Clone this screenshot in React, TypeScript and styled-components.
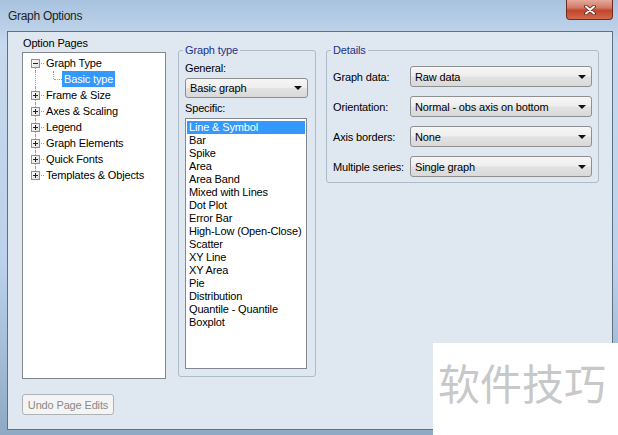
import React from "react";
import styled, { createGlobalStyle } from "styled-components";

const GlobalStyle = createGlobalStyle`
  html, body {
    margin: 0;
    padding: 0;
  }
  body {
    width: 618px;
    height: 435px;
    overflow: hidden;
    font-family: "Liberation Sans", Arial, sans-serif;
    font-size: 11px;
    color: #000;
  }
`;

const Frame = styled.div`
  position: relative;
  width: 618px;
  height: 435px;
  box-sizing: border-box;
  padding: 0 5px 5px 7px;
  display: flex;
  flex-direction: column;
  background: linear-gradient(180deg, #a8c2de 0%, #c6d9ee 10%, #bcd2ea 60%, #8fa9c4 100%);
  overflow: hidden;
`;

const TitleBar = styled.div`
  height: 31px;
  display: flex;
  justify-content: space-between;
  align-items: flex-start;
`;

const Title = styled.div`
  margin-top: 9px;
  padding-left: 1px;
  font-size: 12px;
  letter-spacing: -0.3px;
  color: #1e1e1e;
`;

const CloseButton = styled.div`
  width: 47px;
  height: 20px;
  box-sizing: border-box;
  display: flex;
  align-items: center;
  justify-content: center;
  border: 1px solid #6e2b20;
  border-top: none;
  border-radius: 0 0 4px 4px;
  background: linear-gradient(180deg, #e5a99b 0%, #d47a66 40%, #c2462c 55%, #cf6a4f 100%);
`;

const Client = styled.div`
  flex: 1;
  border: 1px solid #5d7186;
  background: #dfe7f1;
  display: flex;
  flex-direction: column;
  padding: 4px 0 0 14px;
`;

const TopRow = styled.div`
  display: flex;
  align-items: flex-start;
`;

const PagesColumn = styled.div`
  width: 144px;
  display: flex;
  flex-direction: column;
`;

const PagesLabel = styled.div`
  line-height: 14px;
  padding-left: 1px;
  margin-bottom: 2px;
  letter-spacing: -0.15px;
`;

const Tree = styled.div`
  height: 327px;
  box-sizing: border-box;
  border: 1px solid #828790;
  background: #fff;
  padding: 2px 0 0 4px;
`;

const TreeRow = styled.div`
  display: flex;
  height: 16px;
  align-items: center;
`;

type LinePart = "first" | "mid" | "last";

const Gutter = styled.div<{ $line: LinePart; $branch: boolean }>`
  position: relative;
  width: 17px;
  height: 16px;
  flex: none;

  &::before {
    content: "";
    position: absolute;
    left: 8px;
    top: ${(p) => (p.$line === "first" ? "8px" : "0")};
    bottom: ${(p) => (p.$line === "last" ? "8px" : "0")};
    border-left: 1px dotted #9a9a9a;
  }

  &::after {
    content: "";
    display: ${(p) => (p.$branch ? "block" : "none")};
    position: absolute;
    left: 9px;
    right: 0;
    top: 8px;
    border-top: 1px dotted #9a9a9a;
  }
`;

const SubGutter = styled.div`
  position: relative;
  width: 18px;
  height: 16px;
  flex: none;

  &::before {
    content: "";
    position: absolute;
    left: 9px;
    top: 0;
    height: 8px;
    border-left: 1px dotted #9a9a9a;
  }

  &::after {
    content: "";
    position: absolute;
    left: 10px;
    right: 0;
    top: 8px;
    border-top: 1px dotted #9a9a9a;
  }
`;

const ExpanderBox = styled.svg`
  position: absolute;
  left: 4px;
  top: 4px;
  z-index: 1;
`;

const TreeLabel = styled.span<{ $selected?: boolean }>`
  padding: 0 2px;
  line-height: 16px;
  white-space: nowrap;
  letter-spacing: -0.15px;
  background: ${(p) => (p.$selected ? "#3399ff" : "transparent")};
  color: ${(p) => (p.$selected ? "#fff" : "#000")};
`;

const Group = styled.fieldset<{ $width: number; $gap: number; $height?: number }>`
  width: ${(p) => p.$width}px;
  ${(p) => (p.$height ? `height: ${p.$height}px;` : "")}
  box-sizing: border-box;
  margin: 7px 0 0 ${(p) => p.$gap}px;
  border: 1px solid #aebbc9;
  border-radius: 3px;
  min-width: 0;
`;

const GraphTypeGroup = styled(Group)`
  padding: 4px 7px 7px 6px;
  display: flex;
  flex-direction: column;
`;

const DetailsGroup = styled(Group)`
  padding: 9px 6px 5px 6px;
`;

const Legend = styled.legend`
  padding: 0 2px;
  margin-left: -2px;
  line-height: 14px;
  color: #1e3287;
  letter-spacing: -0.15px;
`;

const FieldLabel = styled.div<{ $top?: number }>`
  line-height: 14px;
  margin-top: ${(p) => p.$top ?? 0}px;
  letter-spacing: -0.15px;
`;

const Combo = styled.div<{ $width: number; $height: number; $top?: number }>`
  width: ${(p) => p.$width}px;
  height: ${(p) => p.$height}px;
  margin-top: ${(p) => p.$top ?? 0}px;
  box-sizing: border-box;
  display: flex;
  align-items: center;
  justify-content: space-between;
  padding: 0 5px 0 4px;
  border: 1px solid #8e8f8f;
  border-radius: 3px;
  background: linear-gradient(180deg, #f6f6f6 0%, #eeeeee 48%, #e2e2e2 52%, #d9d9d9 100%);
  letter-spacing: -0.15px;
  white-space: nowrap;
`;

const Arrow = styled.span`
  width: 0;
  height: 0;
  border-left: 4px solid transparent;
  border-right: 4px solid transparent;
  border-top: 4px solid #111;
`;

const ListBox = styled.div`
  width: 122px;
  height: 251px;
  margin-top: 3px;
  box-sizing: border-box;
  border: 1px solid #828790;
  background: #fff;
  padding: 2px 1px 1px;
`;

const ListItem = styled.div<{ $selected?: boolean }>`
  line-height: 13px;
  padding: 0 2px;
  white-space: nowrap;
  letter-spacing: -0.15px;
  background: ${(p) => (p.$selected ? "#3399ff" : "transparent")};
  color: ${(p) => (p.$selected ? "#fff" : "#000")};
`;

const DetailsGrid = styled.div`
  display: grid;
  grid-template-columns: 77px 182px;
  row-gap: 9px;
  align-items: center;
`;

const UndoButton = styled.button`
  align-self: flex-start;
  margin-top: 15px;
  width: 92px;
  height: 21px;
  padding: 0;
  font-family: inherit;
  font-size: 11px;
  letter-spacing: -0.15px;
  color: #8a8a8a;
  border: 1px solid #adb2b5;
  border-radius: 3px;
  background: #f4f4f4;
`;

const Watermark = styled.div`
  position: absolute;
  right: 0;
  bottom: 0;
  width: 185px;
  height: 92px;
  box-sizing: border-box;
  padding: 18px 0 0 5px;
  background: #fff;
  font-family: "Noto Sans CJK SC", sans-serif;
  font-size: 42px;
  line-height: 1;
  color: #c8c8c8;
  white-space: nowrap;
`;

interface TreeItem {
  label: string;
  line: LinePart;
  child?: boolean;
  expanded?: boolean;
  selected?: boolean;
}

const treeItems: TreeItem[] = [
  { label: "Graph Type", line: "first", expanded: true },
  { label: "Basic type", line: "mid", child: true, selected: true },
  { label: "Frame & Size", line: "mid" },
  { label: "Axes & Scaling", line: "mid" },
  { label: "Legend", line: "mid" },
  { label: "Graph Elements", line: "mid" },
  { label: "Quick Fonts", line: "mid" },
  { label: "Templates & Objects", line: "last" },
];

const graphTypes = [
  "Line & Symbol",
  "Bar",
  "Spike",
  "Area",
  "Area Band",
  "Mixed with Lines",
  "Dot Plot",
  "Error Bar",
  "High-Low (Open-Close)",
  "Scatter",
  "XY Line",
  "XY Area",
  "Pie",
  "Distribution",
  "Quantile - Quantile",
  "Boxplot",
];

const details = [
  { label: "Graph data:", value: "Raw data" },
  { label: "Orientation:", value: "Normal - obs axis on bottom" },
  { label: "Axis borders:", value: "None" },
  { label: "Multiple series:", value: "Single graph" },
];

const Expander = ({ expanded }: { expanded?: boolean }) => (
  <ExpanderBox width="9" height="9" viewBox="0 0 9 9">
    <defs>
      <linearGradient id="exp" x1="0" y1="0" x2="1" y2="1">
        <stop offset="0" stopColor="#ffffff" />
        <stop offset="1" stopColor="#dcdcdc" />
      </linearGradient>
    </defs>
    <rect x="0.5" y="0.5" width="8" height="8" fill="url(#exp)" stroke="#8f8f8f" />
    <line x1="2" y1="4.5" x2="7" y2="4.5" stroke="#222" />
    {!expanded && <line x1="4.5" y1="2" x2="4.5" y2="7" stroke="#222" />}
  </ExpanderBox>
);

const CloseGlyph = () => (
  <svg width="12" height="10" viewBox="0 0 12 10">
    <path d="M2 1.5 L10 8.5 M10 1.5 L2 8.5" stroke="#5a2218" strokeWidth="3.6" strokeLinecap="round" />
    <path d="M2 1.5 L10 8.5 M10 1.5 L2 8.5" stroke="#ffffff" strokeWidth="2" strokeLinecap="round" />
  </svg>
);

export default function App() {
  return (
    <>
      <GlobalStyle />
      <Frame>
        <TitleBar>
          <Title>Graph Options</Title>
          <CloseButton>
            <CloseGlyph />
          </CloseButton>
        </TitleBar>
        <Client>
          <TopRow>
            <PagesColumn>
              <PagesLabel>Option Pages</PagesLabel>
              <Tree>
                {treeItems.map((item) => (
                  <TreeRow key={item.label}>
                    <Gutter $line={item.line} $branch={!item.child}>
                      {!item.child && <Expander expanded={item.expanded} />}
                    </Gutter>
                    {item.child && <SubGutter />}
                    <TreeLabel $selected={item.selected}>{item.label}</TreeLabel>
                  </TreeRow>
                ))}
              </Tree>
            </PagesColumn>

            <GraphTypeGroup $width={138} $gap={12} $height={334}>
              <Legend>Graph type</Legend>
              <FieldLabel>General:</FieldLabel>
              <Combo $width={123} $height={20} $top={3}>
                Basic graph
                <Arrow />
              </Combo>
              <FieldLabel $top={3}>Specific:</FieldLabel>
              <ListBox>
                {graphTypes.map((t, i) => (
                  <ListItem key={t} $selected={i === 0}>
                    {t}
                  </ListItem>
                ))}
              </ListBox>
            </GraphTypeGroup>

            <DetailsGroup $width={273} $gap={10}>
              <Legend>Details</Legend>
              <DetailsGrid>
                {details.map((d) => (
                  <React.Fragment key={d.label}>
                    <FieldLabel>{d.label}</FieldLabel>
                    <Combo $width={182} $height={21}>
                      {d.value}
                      <Arrow />
                    </Combo>
                  </React.Fragment>
                ))}
              </DetailsGrid>
            </DetailsGroup>
          </TopRow>
          <UndoButton disabled>Undo Page Edits</UndoButton>
        </Client>
        <Watermark>软件技巧</Watermark>
      </Frame>
    </>
  );
}
